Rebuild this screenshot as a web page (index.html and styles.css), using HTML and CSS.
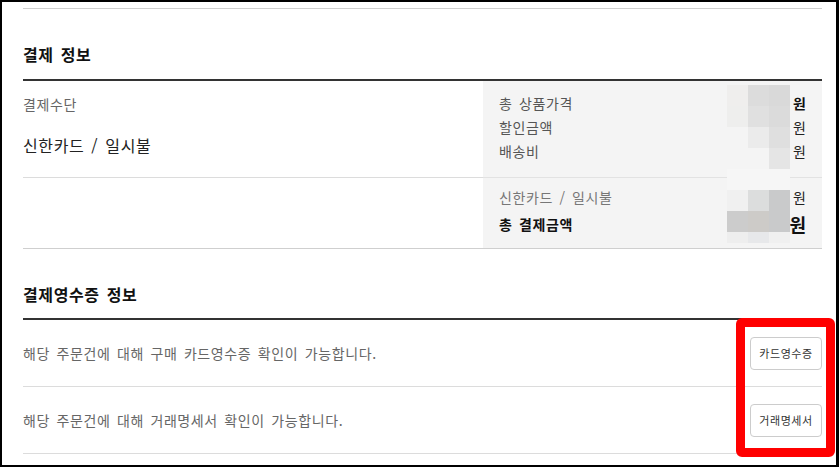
FILE: index.html
```html
<!DOCTYPE html>
<html lang="ko">
<head>
<meta charset="utf-8">
<title>결제 정보</title>
<link rel="stylesheet" href="styles.css">
</head>
<body>
<div class="frame">
  <div class="page">
    <section class="sec sec-first">
      <h2 class="sec-title">결제 정보</h2>
      <div class="pay-table">
        <div class="cell-left r1">
          <div class="pay-label">결제수단</div>
          <div class="pay-value">신한카드 / 일시불</div>
        </div>
        <div class="cell-right r1">
          <div class="sum-line"><span class="sum-label">총 상품가격</span><span class="won won-strong">원</span></div>
          <div class="sum-line"><span class="sum-label">할인금액</span><span class="won">원</span></div>
          <div class="sum-line"><span class="sum-label">배송비</span><span class="won">원</span></div>
        </div>
        <div class="cell-left r2"></div>
        <div class="cell-right r2">
          <div class="sum-line"><span class="sum-label sum-method">신한카드 / 일시불</span><span class="won">원</span></div>
          <div class="sum-line total"><span class="sum-label total-label">총 결제금액</span><span class="won won-total">원</span></div>
        </div>

        <div class="mosaic mosaic-top">
          <i class="m m-a"></i><i class="m m-b"></i><i class="m m-c"></i>
          <i class="m m-a2"></i><i class="m m-b2"></i><i class="m m-c2"></i>
          <i class="m"></i><i class="m m-d"></i><i class="m m-e"></i>
          <i class="m"></i><i class="m"></i><i class="m m-f"></i>
          <i class="m m-faint"></i><i class="m m-faint"></i><i class="m m-faint"></i>
        </div>
        <div class="mosaic mosaic-bottom">
          <i class="m m-g"></i><i class="m m-h"></i><i class="m m-i"></i>
          <i class="m m-j"></i><i class="m m-k"></i><i class="m m-i"></i>
          <i class="m m-l m-short"></i><i class="m m-n m-short"></i><i class="m m-o m-short"></i>
        </div>
      </div>
    </section>

    <section class="sec">
      <h2 class="sec-title sec-title-2">결제영수증 정보</h2>
      <div class="receipt-list">
        <div class="receipt-row">
          <span class="receipt-text">해당 주문건에 대해 구매 카드영수증 확인이 가능합니다.</span>
          <button class="btn" type="button">카드영수증</button>
        </div>
        <div class="receipt-row">
          <span class="receipt-text">해당 주문건에 대해 거래명세서 확인이 가능합니다.</span>
          <button class="btn" type="button">거래명세서</button>
        </div>
      </div>
    </section>
  </div>
  <div class="highlight"></div>
</div>
</body>
</html>
```

FILE: styles.css
```css
html, body {
  margin: 0;
  padding: 0;
  background: #fff;
}

body {
  font-family: "Noto Sans CJK KR", "Noto Sans", sans-serif;
  color: #222;
  letter-spacing: 0.6px;
  word-spacing: 2px;
}

.frame {
  position: relative;
  width: 839px;
  height: 467px;
  box-sizing: border-box;
  border-style: solid;
  border-color: #000;
  border-width: 2px 3px 2px 2px;
  background: #fff;
  overflow: hidden;
}

.page {
  padding: 6px 14px 0 21px;
}

.sec-first {
  border-top: 1px solid #cfcfcf;
}

.sec-title {
  margin: 0;
  padding: 33px 0 13px;
  font-size: 16px;
  line-height: 24px;
  font-weight: 700;
  color: #111;
}

.sec-title-2 {
  padding: 33px 0 12px;
}

/* payment table */
.pay-table {
  position: relative;
  display: grid;
  grid-template-columns: 460px 1fr;
  border-top: 2px solid #333;
}

.cell-left {
  border-bottom: 1px solid #dcdcdc;
}

.cell-left.r1 {
  padding: 13px 0 20px;
}

.cell-right {
  background: #f4f4f4;
  padding: 0 16px;
  border-bottom: 1px solid #e2e2e2;
}

.cell-right.r1 {
  padding-top: 10px;
  padding-bottom: 14px;
}

.cell-right.r2 {
  padding-top: 7px;
  padding-bottom: 9px;
}

.cell-left.r2,
.cell-right.r2 {
  border-bottom-color: #cfcfcf;
}

.pay-label {
  font-size: 14px;
  line-height: 20px;
  color: #666;
}

.pay-value {
  margin-top: 19px;
  font-size: 16px;
  line-height: 24px;
  color: #222;
}

.sum-line {
  display: flex;
  justify-content: space-between;
  align-items: center;
  height: 24px;
  font-size: 14px;
}

.sum-line.total {
  height: 30px;
}

.sum-label {
  color: #555;
}

.sum-method {
  color: #777;
}

.total-label {
  color: #111;
  font-weight: 700;
}

.won {
  color: #222;
  font-size: 14px;
  letter-spacing: 0;
}

.won-strong {
  font-weight: 700;
  color: #111;
}

.won-total {
  font-size: 18px;
  font-weight: 700;
  color: #111;
}

/* redaction mosaic over the amounts */
.mosaic {
  position: absolute;
  left: 704px;
  display: grid;
  grid-template-columns: repeat(3, 21px);
  grid-auto-rows: 21px;
}

.mosaic-top {
  top: 4px;
}

.mosaic-bottom {
  top: 109px;
}

.m {
  display: block;
}

.m-short {
  height: 11px;
}

.m-a { background: #efeeed; }
.m-b { background: #dcdcdc; }
.m-c { background: #d9d9d9; }
.m-a2 { background: #eeeeed; }
.m-b2 { background: #e0e0e0; }
.m-c2 { background: #dbdbdb; }
.m-d { background: #ebebeb; }
.m-e { background: #dfdfdf; }
.m-f { background: #e5e5e5; }
.m-faint { background: #f6f6f6; }
.m-g { background: #f0f0f0; }
.m-h { background: #dcdddd; }
.m-i { background: #c9cacb; }
.m-j { background: #cccccc; }
.m-k { background: #cdcbc8; }
.m-l { background: #eeeeee; }
.m-n { background: #e7e8ea; }
.m-o { background: #f0f0f0; }

/* receipt list */
.receipt-list {
  border-top: 2px solid #333;
}

.receipt-row {
  display: flex;
  align-items: center;
  justify-content: space-between;
  height: 66px;
  border-bottom: 1px solid #dcdcdc;
}

.receipt-text {
  font-size: 14px;
  color: #666;
}

.btn {
  width: 72px;
  height: 33px;
  padding: 0;
  border: 1px solid #cccccc;
  border-radius: 4px;
  background: #fff;
  font-family: "Noto Sans CJK KR", sans-serif;
  font-size: 11px;
  letter-spacing: 0.6px;
  color: #333;
}

/* annotation */
.highlight {
  position: absolute;
  left: 734px;
  top: 316px;
  width: 99px;
  height: 139px;
  box-sizing: border-box;
  border: 9px solid #ff0000;
  border-radius: 6px;
}
```
